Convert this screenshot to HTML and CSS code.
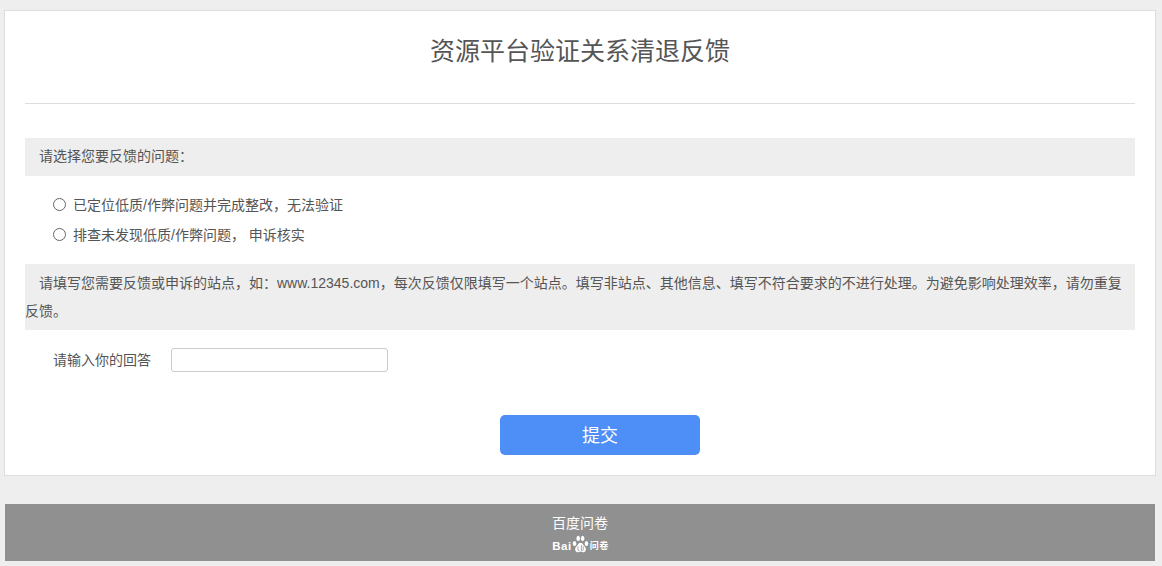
FILE: index.html
```html
<!DOCTYPE html>
<html lang="zh-CN">
<head>
<meta charset="utf-8">
<title>资源平台验证关系清退反馈</title>
<link rel="stylesheet" href="styles.css">
</head>
<body>
<main class="card">
  <header class="head"><h1 class="title">资源平台验证关系清退反馈</h1></header>
  <section class="q q-first">
    <div class="q-title">请选择您要反馈的问题：</div>
    <div class="options">
      <label class="opt"><span class="radio"></span><span class="opt-text">已定位低质/作弊问题并完成整改，无法验证</span></label>
      <label class="opt"><span class="radio"></span><span class="opt-text">排查未发现低质/作弊问题， 申诉核实</span></label>
    </div>
  </section>
  <section class="q">
    <div class="q-desc">请填写您需要反馈或申诉的站点，如：www.12345.com，每次反馈仅限填写一个站点。填写非站点、其他信息、填写不符合要求的不进行处理。为避免影响处理效率，请勿重复反馈。</div>
    <div class="answer">
      <span class="answer-label">请输入你的回答</span>
      <input class="answer-input" type="text">
    </div>
  </section>
  <div class="actions"><button class="submit" type="button">提交</button></div>
</main>
<footer class="foot">
  <div class="foot-name">百度问卷</div>
  <div class="logo">
    <span class="logo-bai">Bai</span>
    <svg class="paw" width="17" height="18" viewBox="0 0 20 19" preserveAspectRatio="none" aria-hidden="true">
      <ellipse cx="3" cy="9" rx="2.1" ry="2.7" fill="#fff"/>
      <ellipse cx="7.3" cy="3.600" rx="2.1" ry="2.8" fill="#fff"/>
      <ellipse cx="12.5" cy="3.600" rx="2.1" ry="2.8" fill="#fff"/>
      <ellipse cx="17" cy="9" rx="2.1" ry="2.7" fill="#fff"/>
      <path d="M10 8.200c-2 0-3 2-4.400 3.400C4 13 3.400 14.300 3.900 16c.5 1.800 2.300 2.300 3.500 2.100 1-.2 1.800-.4 2.600-.4s1.700.2 2.700.4c1.200.2 3-.3 3.400-2.100.5-1.700-.1-3-1.700-4.400C13 10.200 12 8.200 10 8.200z" fill="#fff"/>
      <path d="M7 12v3.200c0 1 .8 1.500 1.600 1.500M11 10.500v6.200M13.200 12v3.200c0 1-.7 1.500-1.600 1.500" fill="none" stroke="#909090" stroke-width=".9"/>
    </svg>
    <span class="logo-wj">问卷</span>
  </div>
</footer>
</body>
</html>
```
FILE: styles.css
```css
* { box-sizing: border-box; }
html, body { margin: 0; padding: 0; }
body {
  background: #eee;
  padding: 10px 6px 0 4px;
  font-family: "Liberation Sans", "Noto Sans CJK SC", sans-serif;
  font-size: 14px;
  color: #555;
}
.card {
  height: 466px;
  background: #fff;
  border: 1px solid #ddd;
  padding: 0 20px;
}
.head {
  height: 93px;
  border-bottom: 1px solid #ddd;
  padding-top: 22px;
}
.title {
  margin: 0;
  font-size: 25px;
  font-weight: 400;
  line-height: 36px;
  text-align: center;
  color: #555;
}
.q-first { margin-top: 34px; }
.q-title {
  height: 38px;
  line-height: 36px;
  padding-left: 14px;
  background: #eee;
}
.options { padding: 14px 0 14px 28px; }
.opt {
  display: flex;
  align-items: center;
  height: 30px;
}
.opt-text { padding-bottom: 2px; }
.radio {
  width: 13px;
  height: 13px;
  border: 1px solid #666;
  border-radius: 50%;
  margin-right: 7px;
  background: #fff;
  flex: none;
  position: relative;
  top: -1px;
}
.q-desc {
  background: #eee;
  padding: 5px 0;
  line-height: 28px;
  text-indent: 14px;
}
.answer {
  display: flex;
  align-items: center;
  margin-top: 18px;
  padding-left: 28px;
}
.answer-label { width: 118px; padding-bottom: 2px; }
.answer-input {
  width: 217px;
  height: 24px;
  border: 1px solid #ccc;
  border-radius: 3px;
  background: #fff;
  padding: 0 6px;
  outline: none;
}
.actions {
  display: flex;
  justify-content: center;
  margin-top: 43px;
  padding-left: 40px;
}
.submit {
  width: 200px;
  height: 40px;
  border: 0;
  border-radius: 5px;
  background: #4e8ef7;
  color: #fff;
  font-family: inherit;
  font-size: 18px;
  padding: 0 0 2px;
}
.foot {
  height: 57px;
  margin: 28px 1px 0;
  background: #909090;
  color: #fff;
  text-align: center;
  overflow: hidden;
}
.foot-name {
  font-size: 14px;
  line-height: 20px;
  margin-top: 9px;
}
.logo {
  display: flex;
  justify-content: center;
  align-items: flex-end;
  height: 20px;
  padding-left: 1px;
}
.logo-bai {
  font-family: "Liberation Sans", sans-serif;
  font-weight: 700;
  font-size: 11.500px;
  line-height: 12px;
  letter-spacing: .5px;
  margin-bottom: 1px;
}
.paw { flex: none; }
.logo-wj {
  font-size: 9px;
  font-weight: 700;
  line-height: 11px;
  letter-spacing: .5px;
  margin-bottom: 1px;
  margin-left: 1px;
}
```
